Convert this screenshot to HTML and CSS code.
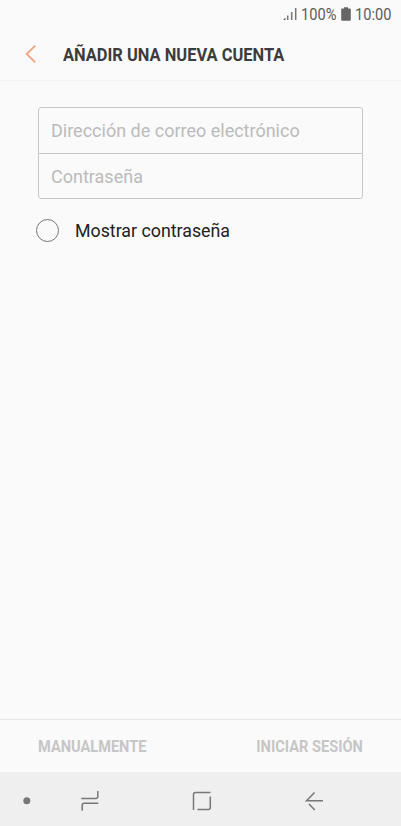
FILE: index.html
```html
<!DOCTYPE html>
<html lang="es">
<head>
<meta charset="utf-8">
<title>Añadir una nueva cuenta</title>
<link rel="stylesheet" href="styles.css">
</head>
<body>
<div class="screen">
  <div class="status">
    <svg class="signal" width="14" height="14" viewBox="0 0 14 14"><path d="M0 13l2.500-2.500V13z" fill="#666"/><path d="M4.700 8.500V13M8.700 5v8M12.700 1v12" stroke="#777" stroke-width="1.500"/></svg>
    <span class="pct">100%</span>
    <svg class="battery" width="10" height="14" viewBox="0 0 10 14"><path d="M3 .3h4V1.500h1.800q1 0 1 1V13q0 .8-1 .8H1.200q-1 0-1-.8V2.500q0-1 1-1H3z" fill="#666"/></svg>
    <span class="time">10:00</span>
  </div>
  <header class="header">
    <svg class="back" width="12" height="20" viewBox="0 0 12 20"><path d="M10.200 1.700L1.700 10l8.500 8.300" fill="none" stroke="#f4a283" stroke-width="1.800"/></svg>
    <h1 class="title">AÑADIR UNA NUEVA CUENTA</h1>
  </header>
  <main class="main">
    <div class="fields">
      <div class="field"><span>Dirección de correo electrónico</span></div>
      <div class="field"><span>Contraseña</span></div>
    </div>
    <div class="show"><i class="radio"></i><span class="label">Mostrar contraseña</span></div>
  </main>
  <footer class="actions"><span class="manual">MANUALMENTE</span><span class="login">INICIAR SESIÓN</span></footer>
  <nav class="nav">
    <svg width="401" height="54" viewBox="0 0 401 54" fill="none" stroke="#777" stroke-width="1.500"><circle cx="26.800" cy="28.800" r="3.500" fill="#777" stroke="none"/><path d="M81.300 26.600h14.500q2 0 2-2V19M98.300 31.200H84.200q-2 0-2 2v5.500"/><path d="M193.500 38V22.500q0-2 2-2h15M210.300 24.500v11q0 2-2 2H197.500"/><path d="M323 28.800h-16.500l8-8.300M309 32l5.800 6"/></svg>
  </nav>
</div>
</body>
</html>
```
FILE: styles.css
```css
* { box-sizing: border-box; }
body { margin: 0; font-family: Roboto, sans-serif; background: #fafafa; }
.screen { width: 401px; height: 826px; display: flex; flex-direction: column; }
.status { height: 28px; display: flex; align-items: center; padding-left: 283px; font-size: 17px; color: #5c5c5c; }
.pct, .time { white-space: nowrap; transform-origin: 0 50%; transform: scaleX(.86); }
.pct { width: 39px; margin-left: 4px; }
.battery { margin: 0 4px 0 1px; }
.signal, .battery { flex: none; }
.header { height: 53px; display: flex; align-items: center; padding: 0 0 1px 25px; border-bottom: 1px solid #f3f3f3; }
.title { margin: 2px 0 0 25.5px; font-size: 18px; font-weight: 700; color: #3c3c3c; white-space: nowrap; transform: scaleX(.914); transform-origin: 0 50%; }
.main { flex: 1; padding: 26px 38px 0; }
.fields { border: 1px solid #c8c8c8; border-radius: 3px; }
.field { height: 45px; display: flex; align-items: center; padding-left: 12px; font-size: 18px; color: #bbb; }
.field + .field { border-top: 1px solid #c8c8c8; }
.show { display: flex; align-items: center; margin: 20px 0 0 -2px; font-size: 18px; color: #222; }
.label { transform: scaleX(.988); transform-origin: 0 50%; }
.radio { width: 23px; height: 23px; border: 1px solid #777; border-radius: 50%; margin-right: 16px; }
.actions { height: 53px; border-top: 1px solid #e6e6e6; display: flex; align-items: center; justify-content: space-between; padding: 0 38px; font-size: 17px; font-weight: 700; color: #c6c6c6; }
.manual { transform: scaleX(.858); transform-origin: 0 50%; }
.login { transform: scaleX(.86); transform-origin: 100% 50%; }
.nav { height: 54px; background: #efefef; }
.nav svg { display: block; }
```
